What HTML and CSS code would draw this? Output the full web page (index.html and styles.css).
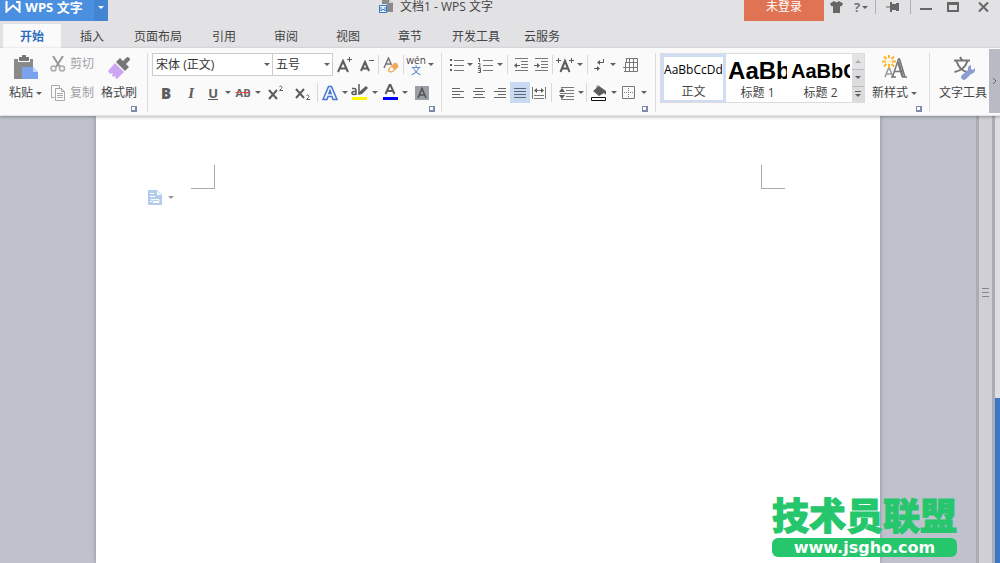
FILE: index.html
```
<!DOCTYPE html>
<html lang="zh-CN">
<head>
  <meta charset="UTF-8" />
  <meta name="viewport" content="width=device-width, initial-scale=1.0"/>
  <title>文档1 - WPS 文字</title>
  <link rel="stylesheet" href="styles.css">
</head>
<body>
  <header class="titlebar">
    <button class="app-button">
      <svg width="16" height="12" viewBox="0 0 16 12"><path d="M1.5 0 V10.5 L8 4.5 L14.5 10.5 V1 H11" fill="none" stroke="#fff" stroke-width="2"/></svg>
      WPS 文字
    </button>
    <button class="app-menu" aria-label="菜单"><i class="arrow"></i></button>
    <h1 class="title">
      <svg width="16" height="14" viewBox="0 0 16 14"><path d="M3 0h5v4H3zM8 0h2l4 3v9H8z" fill="#8a8a8a"/><path d="M10 0l4 3h-4z" fill="#d0d0d0"/><rect x="0.500" y="5.500" width="7" height="7" fill="#e8f0fc" stroke="#3b7ed0"/><path d="M2 7v4l2-2 2 2V7" fill="none" stroke="#3b7ed0"/></svg>
      文档1 - WPS 文字
    </h1>
    <button class="login">未登录</button>
    <div class="window-tools">
      <button class="tool w24" aria-label="皮肤"><svg width="13" height="12" viewBox="0 0 13 12"><path d="M4 0l2.500 1.500L9 0l4 2.500-1.500 3-1.500-.5v7H3V5l-1.500.5L0 2.500z" fill="#666"/></svg></button>
      <button class="tool help w26" aria-label="帮助">?<i class="arrow"></i></button>
      <span class="line"></span>
      <button class="tool w32" aria-label="固定"><svg width="14" height="10" viewBox="0 0 14 10"><path d="M0 4.500h5v1H0zM4 0h2v2h4V1h3v8h-3V8H6v2H4z" fill="#666"/></svg></button>
      <span class="line"></span>
      <button class="tool w28" aria-label="最小化"><svg width="12" height="12" viewBox="0 0 12 12"><path d="M0 7h12v2H0z" fill="#666"/></svg></button>
      <button class="tool w26" aria-label="最大化"><svg width="12" height="10" viewBox="0 0 12 10"><path d="M0 0h12v10H0zM2 3v5h8V3z" fill="#666" fill-rule="evenodd"/></svg></button>
      <button class="tool w34" aria-label="关闭"><svg width="11" height="10" viewBox="0 0 11 10"><path d="M1 .5l9 9M10 .5l-9 9" stroke="#666" stroke-width="2"/></svg></button>
    </div>
  </header>

  <nav class="tabs">
    <a href="#" class="active">开始</a>
    <a href="#">插入</a>
    <a href="#">页面布局</a>
    <a href="#">引用</a>
    <a href="#">审阅</a>
    <a href="#">视图</a>
    <a href="#">章节</a>
    <a href="#">开发工具</a>
    <a href="#">云服务</a>
  </nav>

  <section class="ribbon">
    <!-- clipboard -->
    <div class="group clipboard">
      <div class="columns">
        <button class="big">
          <svg width="26" height="26" viewBox="0 0 26 26"><path d="M1 4h5V2h3V0h4v2h3v2h4v8h-7l-3 2v10H1z" fill="#8a8a8a"/><path d="M5 4h12v3H5z" fill="#fafafa"/><path d="M6 4V2h3V0h4v2h3v4H6z" fill="#777"/><path d="M9 12h11l5 5v7H9z" fill="#7ba2ec"/><path d="M20 12l5 5h-5z" fill="#c5d7fa"/></svg>
          <span>粘贴<i class="arrow"></i></span>
        </button>
        <div class="stack">
          <button class="small">
            <svg width="16" height="16" viewBox="0 0 16 16"><path d="M3 0l7 11M13 0L6 11" stroke="#999" stroke-width="2" fill="none"/><circle cx="3.500" cy="12.500" r="2.500" fill="none" stroke="#aaa" stroke-width="1.500"/><circle cx="12" cy="12.500" r="2.500" fill="none" stroke="#aaa" stroke-width="1.500"/></svg>
            剪切
          </button>
          <button class="small">
            <svg width="16" height="16" viewBox="0 0 16 16"><path d="M4.500 12.500h-3v-12h8v3" fill="none" stroke="#aaa"/><path d="M5.500 3.500h6l3 3v9h-9zM11.500 3.500v3h3M7 8.500h6M7 10.500h6M7 12.500h6" fill="none" stroke="#aaa"/></svg>
            复制
          </button>
        </div>
        <button class="big">
          <svg width="26" height="26" viewBox="0 0 26 26"><path d="M17 6l4-4q3 0 3 3l-4 4 3 3-4 4-9-9 4-4z" fill="#777"/><path d="M9 8l9 9-7 7-2-1 1-2-3 1-1-2 1-2-3 1-2-3z" fill="#cda5f3"/></svg>
          <span>格式刷</span>
        </button>
      </div>
      <button class="launcher" aria-label="剪贴板"></button>
    </div>

    <!-- font -->
    <div class="group font">
      <div class="row">
        <select class="font-name" aria-label="字体"><option>宋体 (正文)</option></select>
        <select class="font-size" aria-label="字号"><option>五号</option></select>
        <button class="tool w24" aria-label="增大字号"><svg width="16" height="16" viewBox="0 0 16 16"><path d="M1 15L6 4l5 11M3 11.500h6" fill="none" stroke="#5c5c5c" stroke-width="2"/><path d="M12.500 0v5M10 2.500h5" stroke="#5c5c5c"/></svg></button>
        <button class="tool w20" aria-label="减小字号"><svg width="14" height="16" viewBox="0 0 14 16"><path d="M1 14L5 5l4 9M3 11.500h4" fill="none" stroke="#5c5c5c" stroke-width="2"/><path d="M9 3.500h5" stroke="#5c5c5c"/></svg></button>
        <span class="line"></span>
        <button class="tool w22" aria-label="清除格式"><svg width="16" height="16" viewBox="0 0 16 16"><path d="M1 11L5.500 1l3 7M3 7h5" fill="none" stroke="#777" stroke-width="1.500"/><path d="M5 12l6-6q2-1 3.500 1t.5 3.500l-5 4.500q-2 1-4 0t-1-3z" fill="#f0aa58"/><path d="M6.500 12l2-2 2.500 2.500-2 1.500q-3 1-2.500-2z" fill="#fff"/></svg></button>
        <span class="line"></span>
        <button class="tool pinyin w22" aria-label="拼音指南"><span>wén</span><b>文</b></button>
        <button class="caret" aria-label="更多拼音"><i class="arrow"></i></button>
      </div>
      <div class="row">
        <button class="tool letter w28"><b>B</b></button>
        <button class="tool letter italic w22">I</button>
        <button class="tool letter underline w22">U</button>
        <button class="caret" aria-label="下划线样式"><i class="arrow"></i></button>
        <button class="tool strike w22">AB</button>
        <button class="caret" aria-label="删除线样式"><i class="arrow"></i></button>
        <button class="tool w28" aria-label="上标"><svg width="16" height="16" viewBox="0 0 16 16"><path d="M1 5l8 9M9 5l-8 9" stroke="#5c5c5c" stroke-width="2"/><path d="M11.500 1.500q1-1 2 0t0 2l-2 2h3.500" fill="none" stroke="#5c5c5c"/></svg></button>
        <button class="tool w26" aria-label="下标"><svg width="16" height="16" viewBox="0 0 16 16"><path d="M1 4l8 9M9 4l-8 9" stroke="#5c5c5c" stroke-width="2"/><path d="M11.500 10.500q1-1 2 0t0 2l-2 2h3.500" fill="none" stroke="#5c5c5c"/></svg></button>
        <span class="line"></span>
        <button class="tool w22" aria-label="文字效果"><svg width="16" height="16" viewBox="0 0 16 16"><path d="M1 14.500L6.500 1.500h3l5.500 13h-4l-1-3H6l-1 3zM7 8.500h2L8 5.500z" fill="#eef4ff" stroke="#4a78cf" stroke-width="1.500"/></svg></button>
        <button class="caret" aria-label="更多文字效果"><i class="arrow"></i></button>
        <button class="tool marker w22" aria-label="突出显示"><svg width="18" height="17" viewBox="0 0 18 17"><path d="M1 4.500h2q2 0 2 2V11M5 7.500H3q-2 0-2 1.500t2 1.500q1 0 2-1M8 0v10" fill="none" stroke="#5c5c5c" stroke-width="1.500"/><path d="M15 2l2 2-6 6-4 1 1-3z" fill="#5c5c5c"/><path d="M1 13h15v3H1z" fill="#fff500"/></svg></button>
        <button class="caret" aria-label="突出显示颜色"><i class="arrow"></i></button>
        <button class="tool w22" aria-label="字体颜色"><svg width="16" height="17" viewBox="0 0 16 17"><path d="M3.500 10L8 0l4.500 10M5 7h6" fill="none" stroke="#5c5c5c" stroke-width="2"/><path d="M1 13h15v3H1z" fill="#00f"/></svg></button>
        <button class="caret" aria-label="更多字体颜色"><i class="arrow"></i></button>
        <button class="tool w26" aria-label="字符底纹"><svg width="14" height="14" viewBox="0 0 14 14"><path d="M0 0h14v14H0z" fill="#9b9fa6"/><path d="M3 12L7 2.500 11 12M4.500 9h5" fill="none" stroke="#505050" stroke-width="1.500"/></svg></button>
      </div>
      <button class="launcher" aria-label="字体设置"></button>
    </div>

    <!-- paragraph -->
    <div class="group paragraph">
      <div class="row">
        <button class="tool w18" aria-label="项目符号"><svg width="16" height="14" viewBox="0 0 16 14"><path d="M5 2.500h10M5 7.500h10M5 12.500h10" stroke="#777"/><path d="M1 1h2v2H1zM1 6h2v2H1zM1 11h2v2H1z" fill="#5c5c5c"/></svg></button>
        <button class="caret" aria-label="项目符号样式"><i class="arrow"></i></button>
        <button class="tool w22" aria-label="编号"><svg width="16" height="16" viewBox="0 0 16 16"><path d="M6 3.500h10M6 8.500h10M6 13.500h10" stroke="#777"/><path d="M1 1.500h1.500V5M1 6.500h2v1.500L1.500 10H4M1 11.500h2.500v4H1M1.500 13.500h2" fill="none" stroke="#5c5c5c"/></svg></button>
        <button class="caret" aria-label="编号样式"><i class="arrow"></i></button>
        <span class="line wide"></span>
        <button class="tool w20" aria-label="减少缩进"><svg width="14" height="14" viewBox="0 0 14 14"><path d="M1 .5h13M7 3.500h7M7 6.500h7M7 9.500h7M1 12.500h13" stroke="#777"/><path d="M0 7.500L3 5v2h3v1H3v2z" fill="#5c5c5c"/></svg></button>
        <button class="tool w20" aria-label="增加缩进"><svg width="14" height="14" viewBox="0 0 14 14"><path d="M1 .5h13M7 3.500h7M7 6.500h7M7 9.500h7M1 12.500h13" stroke="#777"/><path d="M6 7.500L3 5v2H0v1h3v2z" fill="#5c5c5c"/></svg></button>
        <span class="line"></span>
        <button class="tool w22" aria-label="中文版式"><svg width="18" height="16" viewBox="0 0 18 16"><path d="M4.500 15L9 4l4.500 11M6 11.500h6" fill="none" stroke="#5c5c5c" stroke-width="2"/><path d="M0 3.500h5M2.500 1v5M13 3.500h5M15.500 1v5" fill="none" stroke="#5c5c5c"/></svg></button>
        <button class="caret" aria-label="更多版式"><i class="arrow"></i></button>
        <span class="line wide"></span>
        <button class="tool w18" aria-label="显示标记"><svg width="12" height="14" viewBox="0 0 12 14"><path d="M9.500 1v3.500H5M0 10.500h5" fill="none" stroke="#5c5c5c"/><path d="M6 2v5L3 4.500zM3 8v5l3-2.500z" fill="#5c5c5c"/></svg></button>
        <button class="caret" aria-label="标记选项"><i class="arrow"></i></button>
        <button class="tool w26" aria-label="插入表格"><svg width="15" height="14" viewBox="0 0 15 14"><path d="M3 .5h11.500v13H1M3.500 0v4M6.500 0v14M10.500 0v14M2 4.500h13M0 9.500h15M2.500 4v9" fill="none" stroke="#777"/></svg></button>
      </div>
      <div class="row">
        <button class="tool w20" aria-label="左对齐"><svg width="14" height="12" viewBox="0 0 14 12"><path d="M1 1.500h8M1 4.500h12M1 7.500h8M1 10.500h12" stroke="#666"/></svg></button>
        <button class="tool w22" aria-label="居中"><svg width="14" height="12" viewBox="0 0 14 12"><path d="M3 1.500h8M1 4.500h12M3 7.500h8M1 10.500h12" stroke="#666"/></svg></button>
        <button class="tool w20" aria-label="右对齐"><svg width="14" height="12" viewBox="0 0 14 12"><path d="M5 1.500h8M1 4.500h12M5 7.500h8M1 10.500h12" stroke="#666"/></svg></button>
        <button class="tool pressed w20" aria-label="两端对齐"><svg width="14" height="12" viewBox="0 0 14 12"><path d="M1 1.500h12M1 4.500h12M1 7.500h12M1 10.500h12" stroke="#5a6473"/></svg></button>
        <button class="tool w18" aria-label="分散对齐"><svg width="16" height="12" viewBox="0 0 16 12"><path d="M1.500 0v12M14.500 0v12M3 8.500h10M3 11.500h10M5 3.500h6" stroke="#777"/><path d="M6 1v5L3 3.500zM10 1v5l3-2.500z" fill="#5c5c5c"/></svg></button>
        <span class="line wide"></span>
        <button class="tool w22" aria-label="行距"><svg width="15" height="14" viewBox="0 0 15 14"><path d="M2 1.500h13M7 4.500h8M1 7.500h14M7 10.500h8M2 13.500h13" stroke="#777"/><path d="M3 2l3 4H0zM3 13l3-4H0z" fill="#5c5c5c"/></svg></button>
        <button class="caret" aria-label="行距选项"><i class="arrow"></i></button>
        <span class="line"></span>
        <button class="tool w22" aria-label="底纹颜色"><svg width="16" height="16" viewBox="0 0 16 16"><path d="M2 6l6-5 7 5v4l-2-2-5 3z" fill="#5c5c5c"/><path d="M6 5V1.500q1-2 2 0" fill="none" stroke="#5c5c5c"/><path d="M.5 12.500h14v3H.5z" fill="#fff" stroke="#111"/></svg></button>
        <button class="caret" aria-label="更多底纹"><i class="arrow"></i></button>
        <button class="tool w22" aria-label="边框"><svg width="14" height="14" viewBox="0 0 14 14"><path d="M.5 .5h12v12H.5z" fill="none" stroke="#777"/><path d="M6.500 2v10M2 6.500h10" stroke="#777" stroke-dasharray="1 1"/></svg></button>
        <button class="caret" aria-label="更多边框"><i class="arrow"></i></button>
      </div>
      <button class="launcher" aria-label="段落设置"></button>
    </div>

    <!-- styles -->
    <div class="group styles">
      <div class="columns">
        <div class="gallery">
          <button class="style selected"><span class="sample">AaBbCcDd</span><span>正文</span></button>
          <button class="style"><span class="sample h1">AaBb</span><span>标题 1</span></button>
          <button class="style"><span class="sample h2">AaBbC</span><span>标题 2</span></button>
          <div class="gallery-scroll">
            <button class="off" aria-label="向上"><i class="arrow up"></i></button>
            <button aria-label="向下"><i class="arrow"></i></button>
            <button class="more" aria-label="全部样式"><i class="arrow"></i></button>
          </div>
        </div>
        <button class="big new-style">
          <svg width="26" height="26" viewBox="0 0 26 26"><path d="M3 22L7 12l4 10M5 19h4" fill="none" stroke="#999" stroke-width="1.500"/><path d="M9 22h5M10.500 22L16.500 4h1L23 22M12.500 16.500h8M20 22h5" fill="none" stroke="#777" stroke-width="1.500"/><path d="M17 5l5 17h-2.500L15.500 9z" fill="#777"/><path d="M7 0v3M7 9v4M0 6.500h4M10 6.500h4M2 1.500l2.500 2.500M12 1.500L9.500 4M2 11.500L4.500 9M12 11.500L9.500 9" stroke="#ffb52b" stroke-width="2"/><circle cx="7" cy="6.500" r="2.500" fill="#fff5d0"/></svg>
          <span>新样式<i class="arrow"></i></span>
        </button>
      </div>
      <button class="launcher" aria-label="样式设置"></button>
    </div>

    <div class="group tools">
      <button class="big">
        <svg width="26" height="26" viewBox="0 0 26 26"><path d="M4 5.500h16M10 2l2 3M6.500 6q3 9 10 11M17.500 6q-3 9-13 11" fill="none" stroke="#777" stroke-width="2"/><path d="M12 20l6-5q-1-4 3-5v4l2 1 2-2q1 5-4 6l-5 5q-2 2-4 0t0-4z" fill="#8c9dd0"/></svg>
        <span>文字工具</span>
      </button>
    </div>
    <button class="ribbon-next" aria-label="下一页"><svg width="5" height="8" viewBox="0 0 5 8"><path d="M1 1l3 3-3 3" fill="none" stroke="#666"/></svg></button>
  </section>

  <main class="workspace">
    <article class="page">
      <div class="corners">
        <span class="corner left"></span>
        <span class="corner right"></span>
      </div>
      <button class="doc-menu" aria-label="文档选项">
        <svg width="14" height="15" viewBox="0 0 14 15"><path d="M0 0h9l5 5v10H0z" fill="#b3cbed"/><path d="M9 1v4h4z" fill="#fff"/><path d="M2 3.500h4M2 6.500h5M2 11.500h2M3 9.500h8v2H5v-1M11 12.500H5" fill="none" stroke="#fff"/></svg>
        <i class="arrow"></i>
      </button>
    </article>
    <aside class="splitter"><svg width="7" height="9" viewBox="0 0 7 9"><path d="M0 .5h7M0 4.500h7M0 8.500h7" stroke="#85858b"/></svg></aside>
    <aside class="desktop"></aside>
    <div class="watermark">
      <strong>技术员联盟</strong>
      <span>www.jsgho.com</span>
    </div>
  </main>
</body>
</html>
```
FILE: styles.css
```
* {
  box-sizing: border-box;
}

body {
  margin: 0;
  height: 100vh;
  display: flex;
  flex-direction: column;
  overflow: hidden;
  font-family: "Open Sans", "Noto Sans CJK SC", sans-serif;
  font-size: 12px;
  line-height: 16px;
  color: #444;
  background: #e2e2e4;
}

button {
  display: flex;
  align-items: center;
  justify-content: center;
  flex: none;
  padding: 0;
  border: 0;
  background: none;
  font: inherit;
  color: inherit;
  white-space: nowrap;
}

svg {
  display: block;
  flex: none;
}

.arrow {
  display: inline-block;
  flex: none;
  border: 3px solid transparent;
  border-top-color: #606060;
  border-bottom: 0;
}

.arrow.up {
  border-top: 0;
  border-bottom: 3px solid #aaa;
}

/* title bar */
.titlebar {
  display: flex;
  align-items: flex-start;
  height: 24px;
  flex: none;
}

.titlebar button {
  height: 21px;
  padding-bottom: 7px;
  line-height: 14px;
}

.titlebar .app-button {
  width: 94px;
  gap: 4px;
  padding-right: 6px;
  background: #4b8fe0;
  color: #fff;
  font-size: 13px;
  font-weight: bold;
}

.titlebar .app-menu {
  width: 14px;
  background: #4384d3;
}

.app-menu .arrow {
  border-top-color: #fff;
}

.title {
  flex: 1;
  display: flex;
  align-items: center;
  justify-content: center;
  gap: 5px;
  height: 14px;
  margin: 0;
  padding-left: 20px;
  font-size: 12px;
  font-weight: normal;
  white-space: nowrap;
}

.titlebar .login {
  width: 80px;
  background: #e07353;
  color: #fff;
}

.window-tools {
  display: flex;
}

.window-tools .line {
  height: 14px;
  background: #b0b0b4;
}

.titlebar .help {
  gap: 2px;
  font-size: 13px;
  font-weight: bold;
  color: #777;
}

/* tabs */
.tabs {
  display: flex;
  flex: none;
  height: 24px;
  padding-left: 3px;
}

.tabs a {
  min-width: 62px;
  padding: 0 11px;
  line-height: 26px;
  text-align: center;
  color: #444;
  text-decoration: none;
}

.tabs a.active {
  min-width: 58px;
  background: #fafafa;
  color: #2e6fc0;
  font-weight: bold;
}

/* ribbon */
.ribbon {
  display: flex;
  flex: none;
  height: 68px;
  padding-top: 5px;
  background: #fafafa;
  border-bottom: 1px solid #e4e4e6;
  box-shadow: 0 1px 3px rgba(0,0,0,0.3);
  z-index: 1;
}

.group {
  display: flex;
  flex-direction: column;
  flex: none;
  height: 59px;
  border-right: 1px solid #dcdcde;
}

.clipboard {
  padding: 0 10px 0 9px;
}

.font {
  padding: 0 6px 0 4px;
}

.paragraph {
  padding: 0 7px 0 6px;
}

.styles {
  padding: 0 7px 0 4px;
}

.tools {
  padding: 0 2px 0 9px;
  border: 0;
}

.row {
  display: flex;
  align-items: center;
  height: 23px;
}

.row + .row {
  height: 21px;
  margin-top: 6px;
}

.row .tool,
.row .caret {
  height: 21px;
}

.w18 { width: 18px; }
.w20 { width: 20px; }
.w22 { width: 22px; }
.w24 { width: 24px; }
.w26 { width: 26px; }
.w28 { width: 28px; }
.w32 { width: 32px; }
.w34 { width: 34px; }

.caret {
  width: 8px;
}

.line {
  width: 1px;
  height: 19px;
  margin: 0 1px;
  background: #d8d8da;
}

.line.wide {
  margin: 0 3px;
}

.pressed {
  background: #c8d9f1;
}

.launcher {
  width: 6px;
  height: 6px;
  margin-top: 3px;
  align-self: flex-end;
  border: solid #7d89a8;
  border-width: 1px 2px 2px 1px;
}

.columns {
  display: flex;
  height: 50px;
}

.big {
  flex-direction: column;
  justify-content: flex-start;
  gap: 4px;
  padding-top: 2px;
}

.big > span {
  display: flex;
  align-items: center;
  gap: 3px;
}

.stack {
  display: flex;
  flex-direction: column;
  gap: 7px;
  padding: 0 7px 0 8px;
}

.small {
  height: 22px;
  gap: 4px;
  color: #a0a0a4;
}

.ribbon select {
  height: 23px;
  padding: 0 3px;
  appearance: none;
  border: 1px solid #ccc;
  border-radius: 0;
  font: inherit;
  color: #333;
  background: #fff url("data:image/svg+xml,%3Csvg xmlns='http://www.w3.org/2000/svg' viewBox='0 0 6 3'%3E%3Cpath d='M0 0h6L3 3z' fill='%23606060'/%3E%3C/svg%3E") no-repeat right 2px center / 6px 3px;
}

.font-name {
  width: 121px;
}

.ribbon .font-size {
  width: 60px;
  border-left: 0;
}

.pinyin {
  flex-direction: column;
  font-size: 10px;
  line-height: 10px;
}

.pinyin b {
  font-weight: normal;
  color: #4a78cf;
}

.letter {
  font-size: 15px;
  font-weight: bold;
  color: #5c5c5c;
}

.italic {
  font-family: "Liberation Serif", serif;
  font-style: italic;
}

.underline {
  font-size: 13px;
  text-decoration: underline;
}

.strike {
  font-size: 11px;
  font-weight: bold;
  color: #666;
  text-decoration: line-through #e04848;
}

/* style gallery */
.gallery {
  display: flex;
  border: 1px solid #dcdcde;
  background: #fff;
}

.style {
  flex-direction: column;
  justify-content: flex-end;
  align-items: stretch;
  width: 63px;
  overflow: hidden;
  padding: 0 2px 1px;
}

.style.selected {
  width: 65px;
  padding: 0;
  border: 3px solid #cfdcf4;
  border-bottom-width: 2px;
}

.sample {
  height: 30px;
  line-height: 32px;
  overflow: hidden;
  text-align: left;
  color: #000;
}

.style.selected .sample {
  height: 27px;
  line-height: 26px;
}

.sample.h1,
.sample.h2 {
  font-family: "Liberation Sans", sans-serif;
  font-size: 24px;
  font-weight: bold;
}

.sample.h2 {
  font-size: 20px;
}

.gallery-scroll {
  display: flex;
  flex-direction: column;
  width: 12px;
  gap: 1px;
  background: #bbb;
}

.gallery-scroll button {
  flex: 1;
  background: #dcdcde;
}

.gallery-scroll .off {
  background: #e4e4e6;
}

.gallery-scroll .more {
  flex-direction: column;
  gap: 2px;
}

.more::before {
  content: "";
  order: -1;
  width: 6px;
  height: 1px;
  background: #606060;
}

.new-style {
  padding: 2px 5px 0 7px;
}

.ribbon-next {
  width: 11px;
  height: 64px;
  margin: -4px 0 0 auto;
  background: #b8bac4;
}

/* document */
.workspace {
  position: relative;
  display: flex;
  flex: 1;
  background: #bfc2cc;
}

.page {
  flex: 1;
  margin: 0 96px;
  padding-top: 49px;
  background: #fff;
  box-shadow: 0 0 4px rgba(70,80,100,0.5);
}

.corners {
  display: flex;
  justify-content: space-between;
  padding: 0 95px;
}

.corner {
  width: 24px;
  height: 24px;
  border-bottom: 1px solid #aaa;
}

.corner.left {
  border-right: 1px solid #aaa;
}

.corner.right {
  border-left: 1px solid #aaa;
}

.doc-menu {
  gap: 6px;
  margin: 1px 52px;
}

.doc-menu .arrow {
  border-top-color: #999;
}

.splitter {
  display: flex;
  align-items: center;
  justify-content: center;
  width: 19px;
  padding-bottom: 94px;
  background: #d0d0d4;
  border: solid #acacb5;
  border-width: 0 3px;
}

.desktop {
  width: 5px;
  background: linear-gradient(#dedee0 63%, #3b78c8 63%);
}

/* site mark over the lower right corner */
.watermark {
  position: absolute;
  right: 43px;
  bottom: 6px;
  display: flex;
  flex-direction: column;
  align-items: center;
  gap: 2px;
  color: #25c66c;
}

.watermark strong {
  font-family: "Noto Sans CJK SC", sans-serif;
  font-size: 37px;
  font-weight: 900;
  line-height: 44px;
  -webkit-text-stroke: 1px #25c66c;
}

.watermark span {
  width: 100%;
  border-radius: 6px;
  background: #25c66c;
  color: #fff;
  font-family: "DejaVu Sans", sans-serif;
  font-size: 16px;
  font-weight: bold;
  line-height: 19px;
  text-align: center;
}
```
